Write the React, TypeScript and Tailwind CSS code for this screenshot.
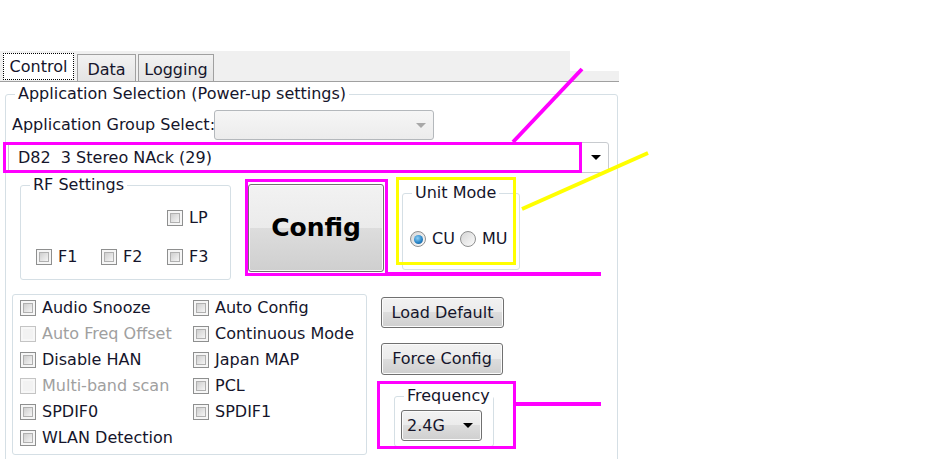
import { clsx } from 'clsx'

const face =
  'rounded-[3px] border border-[#707070] bg-[linear-gradient(#f2f2f2,#ebebeb_50%,#dddddd_50%,#cfcfcf)] shadow-[inset_0_0_0_1px_#fbfbfb]'
const btn = clsx(face, 'flex items-center justify-center')

function Arrow({ light }: { light?: boolean }) {
  return (
    <span
      className={clsx(
        'h-0 w-0 border-x-[5px] border-t-[5px] border-x-transparent',
        light ? 'border-t-[#a8a8a8]' : 'border-t-black',
      )}
    />
  )
}

function Check({ label, disabled }: { label: string; disabled?: boolean }) {
  return (
    <label className="flex h-[26px] items-center gap-[6px] whitespace-nowrap">
      <span
        className={clsx(
          'flex h-4 w-4 shrink-0 items-center justify-center border',
          disabled ? 'border-[#c4c4c4] bg-[#f7f7f7]' : 'border-[#8e8f8f] bg-[#f6f6f6]',
        )}
      >
        <span
          className={clsx(
            'h-[10px] w-[10px]',
            disabled
              ? 'bg-[#f2f2f2]'
              : 'border border-[#b0b0b0] bg-linear-to-br from-[#cfcfcf] to-[#f5f5f5]',
          )}
        />
      </span>
      <span className={disabled ? 'text-[#a0a0a0]' : ''}>{label}</span>
    </label>
  )
}

function Radio({ label, checked }: { label: string; checked?: boolean }) {
  return (
    <label className="flex h-5 items-center gap-[6px]">
      <span className="flex h-4 w-4 items-center justify-center rounded-full border border-[#8e8f8f] bg-linear-to-br from-[#d6d6d6] to-[#fbfbfb]">
        {checked && (
          <span className="h-[9px] w-[9px] rounded-full bg-[radial-gradient(circle_at_40%_35%,#8fd0f5,#2a86c8_55%,#0d4b84)]" />
        )}
      </span>
      <span>{label}</span>
    </label>
  )
}

function Group({
  title,
  className,
  children,
}: {
  title: string
  className?: string
  children?: React.ReactNode
}) {
  return (
    <fieldset className={clsx('rounded-[3px] border border-[#d5dfe5]', className)}>
      <legend className="ml-[9px] whitespace-nowrap px-[3px] leading-[18px]">{title}</legend>
      {children}
    </fieldset>
  )
}

function Annotations() {
  return (
    <svg
      className="pointer-events-none absolute inset-0"
      width={947}
      height={459}
      viewBox="0 0 947 459"
    >
      <g fill="none" stroke="#ff00ff">
        <rect x={4.5} y={143.5} width={576} height={28} strokeWidth={3} />
        <rect x={246.5} y={180.5} width={140} height={94} strokeWidth={3} />
        <rect x={378.5} y={382.5} width={136} height={65} strokeWidth={3} />
        <line x1={513} y1={142} x2={582} y2={69} strokeWidth={4} />
        <line x1={388} y1={274} x2={601} y2={274} strokeWidth={4} />
        <line x1={516} y1={404} x2={601} y2={404} strokeWidth={4} />
      </g>
      <g fill="none" stroke="#ffff00">
        <rect x={397.5} y={178.5} width={117} height={85} strokeWidth={3} />
        <line x1={522} y1={209} x2={648} y2={153} strokeWidth={4} />
      </g>
    </svg>
  )
}

export default function App() {
  return (
    <div className="relative h-[459px] w-[947px] overflow-hidden bg-white font-['DejaVu_Sans',sans-serif] text-[16px] text-[#15152b]">
      <div className="w-[619px] pt-[51px]">
        {/* tab strip */}
        <div className="flex h-[30px] items-end">
          <div className="flex h-full w-[570px] items-end gap-[3px] bg-[#f0f0f0] pl-[3px]">
            <div className="mb-px flex h-[27px] w-[71px] items-center justify-center border border-dotted border-black bg-white">
              Control
            </div>
            <div className="flex h-[27px] w-[59px] items-center justify-center border border-b-0 border-[#a0a0a0] bg-linear-to-b from-[#f2f2f2] to-[#e4e4e4] pt-[3px]">
              Data
            </div>
            <div className="-ml-px flex h-[27px] w-[76px] items-center justify-center border border-b-0 border-[#a0a0a0] bg-linear-to-b from-[#f2f2f2] to-[#e4e4e4] pt-[3px]">
              Logging
            </div>
          </div>
          <div className="h-[10px] flex-1 bg-[#f0f0f0]" />
        </div>
        <div className="h-px bg-[#a0a0a0]" />

        <Group title="Application Selection (Power-up settings)" className="ml-[5px] mt-[3px] h-[400px] w-[613px]">
          <div className="mt-[7px] flex h-[30px] items-center">
            <span className="ml-[6px] w-[202px] whitespace-nowrap">Application Group Select:</span>
            <div className="flex h-[30px] w-[220px] items-center justify-end rounded-[3px] border border-[#b4b8bc] bg-linear-to-b from-[#f6f6f6] to-[#ececec] pr-[7px]">
              <Arrow light />
            </div>
          </div>

          <div className="ml-[2px] mt-[2px] flex h-[31px] w-[601px] items-center justify-between rounded-[3px] border border-[#c8cbcf] bg-white pl-[9px] pr-[7px]">
            <span className="whitespace-pre">D82  3 Stereo NAck (29)</span>
            <Arrow />
          </div>

          <div className="mt-[3px] flex items-start">
            <Group title="RF Settings" className="ml-[14px] h-[104px] w-[211px]">
              <div className="ml-[146px] mt-[11px]">
                <Check label="LP" />
              </div>
              <div className="mt-[13px] grid grid-cols-[65px_66px_auto] pl-[15px]">
                <Check label="F1" />
                <Check label="F2" />
                <Check label="F3" />
              </div>
            </Group>

            <button
              type="button"
              className={clsx(btn, 'ml-[17px] mt-[8px] h-[88px] w-[136px] text-[25px] font-bold text-black')}
            >
              Config
            </button>

            <Group title="Unit Mode" className="ml-[18px] mt-[8px] h-[86px] w-[118px]">
              <div className="mt-[27px] flex items-center gap-[5px] pl-[7px]">
                <Radio label="CU" checked />
                <Radio label="MU" />
              </div>
            </Group>
          </div>

          <div className="mt-[14px] flex items-start">
            <div className="ml-[6px] grid h-[161px] w-[355px] grid-cols-[173px_auto] content-start rounded-[3px] border border-[#d5dfe5] pl-[7px]">
              <Check label="Audio Snooze" />
              <Check label="Auto Config" />
              <Check label="Auto Freq Offset" disabled />
              <Check label="Continuous Mode" />
              <Check label="Disable HAN" />
              <Check label="Japan MAP" />
              <Check label="Multi-band scan" disabled />
              <Check label="PCL" />
              <Check label="SPDIF0" />
              <Check label="SPDIF1" />
              <Check label="WLAN Detection" />
            </div>

            <div className="ml-[14px] flex flex-col items-start">
              <button type="button" className={clsx(btn, 'mt-[3px] h-[31px] w-[123px]')}>
                Load Default
              </button>
              <button type="button" className={clsx(btn, 'mt-[15px] h-[32px] w-[122px]')}>
                Force Config
              </button>
              <Group title="Frequency" className="ml-[13px] mt-[12px] h-[60px] w-[96px]">
                <div className={clsx(face, 'ml-[6px] mt-[5px] flex h-[31px] w-[81px] items-center justify-between pl-[5px] pr-[8px]')}>
                  <span>2.4G</span>
                  <Arrow />
                </div>
              </Group>
            </div>
          </div>
        </Group>
      </div>
      <Annotations />
    </div>
  )
}
